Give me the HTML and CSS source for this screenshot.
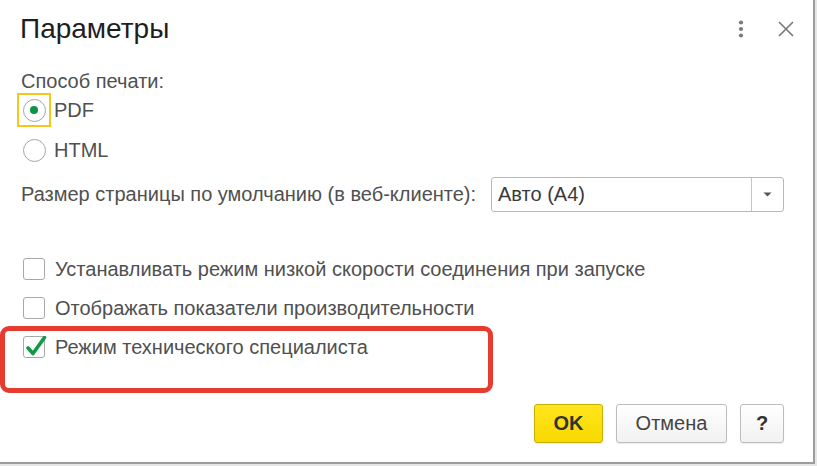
FILE: index.html
```html
<!DOCTYPE html>
<html lang="ru">
<head>
  <meta charset="UTF-8">
  <title>Параметры</title>
  <link rel="stylesheet" href="styles.css">
</head>
<body>
<div class="dialog">
  <div class="dialog_head">
    <h1 class="dialog_title">Параметры</h1>
    <div class="head_btns">
      <svg class="head_icon" width="24" height="24" viewBox="0 0 24 24">
        <circle cx="12" cy="5.5" r="2.1" fill="#7a7a7a"/>
        <circle cx="12" cy="12" r="2.1" fill="#7a7a7a"/>
        <circle cx="12" cy="18.5" r="2.1" fill="#7a7a7a"/>
      </svg>
      <svg class="head_icon" width="24" height="24" viewBox="0 0 24 24">
        <path d="M5 5 L19 19 M19 5 L5 19" stroke="#777" stroke-width="1.6" fill="none"/>
      </svg>
    </div>
  </div>

  <div class="dialog_body">
    <div class="field_label">Способ печати:</div>
    <label class="radio_row first">
      <span class="radio_box focused"><span class="radio checked"></span></span>
      PDF
    </label>
    <label class="radio_row">
      <span class="radio_box"><span class="radio"></span></span>
      HTML
    </label>

    <div class="select_row">
      <span>Размер страницы по умолчанию (в веб-клиенте):</span>
      <div class="select">
        <span class="select_value">Авто (А4)</span>
        <span class="select_btn">
          <svg width="9" height="5" viewBox="0 0 9 5"><path d="M0.5 0.5 H8.5 L4.5 4.5 Z" fill="#555"/></svg>
        </span>
      </div>
    </div>

    <label class="check_row first">
      <span class="check"></span>
      Устанавливать режим низкой скорости соединения при запуске
    </label>
    <label class="check_row">
      <span class="check"></span>
      Отображать показатели производительности
    </label>
    <div class="marked">
      <label class="check_row">
        <span class="check">
          <svg class="tick" width="26" height="24" viewBox="0 0 26 24">
            <path d="M5 12 L10 17.5 L21.5 1.5" stroke="#109a45" stroke-width="3.6" fill="none" stroke-linecap="round" stroke-linejoin="round"/>
          </svg>
        </span>
        Режим технического специалиста
      </label>
    </div>
  </div>

  <div class="dialog_foot">
    <button class="btn btn_ok">OK</button>
    <button class="btn">Отмена</button>
    <button class="btn btn_help">?</button>
  </div>
</div>
</body>
</html>
```

FILE: styles.css
```css
body {
  margin: 0;
  background: #e6e6e6;
  font-family: "Liberation Sans", Arial, sans-serif;
  color: #505050;
  font-size: 20px;
}
.dialog {
  box-sizing: border-box;
  width: 815px;
  height: 464px;
  background: #fff;
  border-right: 2px solid #9c9c9c;
  border-bottom: 2px solid #9c9c9c;
  display: flex;
  flex-direction: column;
}
.dialog_head {
  display: flex;
  justify-content: space-between;
  align-items: flex-start;
  padding: 13px 15px 0 20px;
  height: 45px;
}
.dialog_title {
  margin: 0;
  font-size: 28px;
  line-height: 32px;
  font-weight: normal;
  color: #1e1e1e;
}
.head_btns {
  display: flex;
  gap: 21px;
  margin-top: 4px;
}
.dialog_body {
  padding: 12px 29px 0 21px;
}
.field_label {
  line-height: 22px;
}
.radio_row {
  display: flex;
  align-items: center;
  height: 34px;
  margin-top: 6px;
  line-height: 22px;
}
.radio_row.first {
  margin-top: 1px;
}
.radio_box {
  box-sizing: border-box;
  width: 34px;
  height: 34px;
  margin-left: -4px;
  margin-right: 3px;
  border: 2px solid transparent;
  display: flex;
  align-items: center;
  justify-content: center;
}
.radio_box.focused {
  border-color: #f5c71a;
}
.radio {
  box-sizing: border-box;
  width: 23px;
  height: 23px;
  border: 1px solid #a6a6a6;
  border-radius: 50%;
  display: flex;
  align-items: center;
  justify-content: center;
}
.radio.checked::after {
  content: "";
  width: 8px;
  height: 8px;
  border-radius: 50%;
  background: #0b9447;
}
.select_row {
  display: flex;
  justify-content: space-between;
  align-items: center;
  margin-top: 10px;
  height: 35px;
}
.select {
  box-sizing: border-box;
  width: 293px;
  height: 35px;
  border: 1px solid #b8b8b8;
  border-radius: 3px;
  display: flex;
}
.select_value {
  flex: 1;
  padding-left: 6px;
  line-height: 33px;
  color: #3a3a3a;
}
.select_btn {
  width: 31px;
  border-left: 1px solid #c4c4c4;
  display: flex;
  align-items: center;
  justify-content: center;
}
.check_row {
  display: flex;
  align-items: center;
  height: 30px;
  margin-top: 9px;
  line-height: 22px;
}
.check_row.first {
  margin-top: 42px;
}
.check {
  position: relative;
  box-sizing: border-box;
  width: 22px;
  height: 22px;
  margin-left: 2px;
  margin-right: 10px;
  border: 1px solid #a9a9a9;
  border-radius: 3px;
  flex: none;
}
.tick {
  position: absolute;
  left: -1px;
  top: -1px;
}
.marked {
  box-sizing: border-box;
  width: 493px;
  height: 67px;
  margin-left: -21px;
  margin-top: 3px;
  padding: 1px 0 0 0;
  border: 5px solid #e63b2f;
  border-radius: 9px;
}
.marked .check_row {
  margin-top: 0;
}
.marked .check {
  margin-left: 18px;
}
.dialog_foot {
  display: flex;
  justify-content: flex-end;
  padding: 11px 29px 0 0;
}
.btn {
  box-sizing: border-box;
  height: 39px;
  width: 111px;
  margin-left: 13px;
  border: 1px solid #bdbdbd;
  border-radius: 3px;
  background: linear-gradient(#ffffff, #f1f1f1);
  font-family: inherit;
  font-size: 20px;
  color: #444;
  box-shadow: 0 1px 1px rgba(0, 0, 0, 0.08);
}
.btn_ok {
  width: 69px;
  margin-left: 0;
  background: linear-gradient(#ffe51e, #f7d900);
  border-color: #c9ad00;
  font-weight: bold;
  color: #333;
}
.btn_help {
  width: 44px;
  font-weight: bold;
  color: #333;
}
```
